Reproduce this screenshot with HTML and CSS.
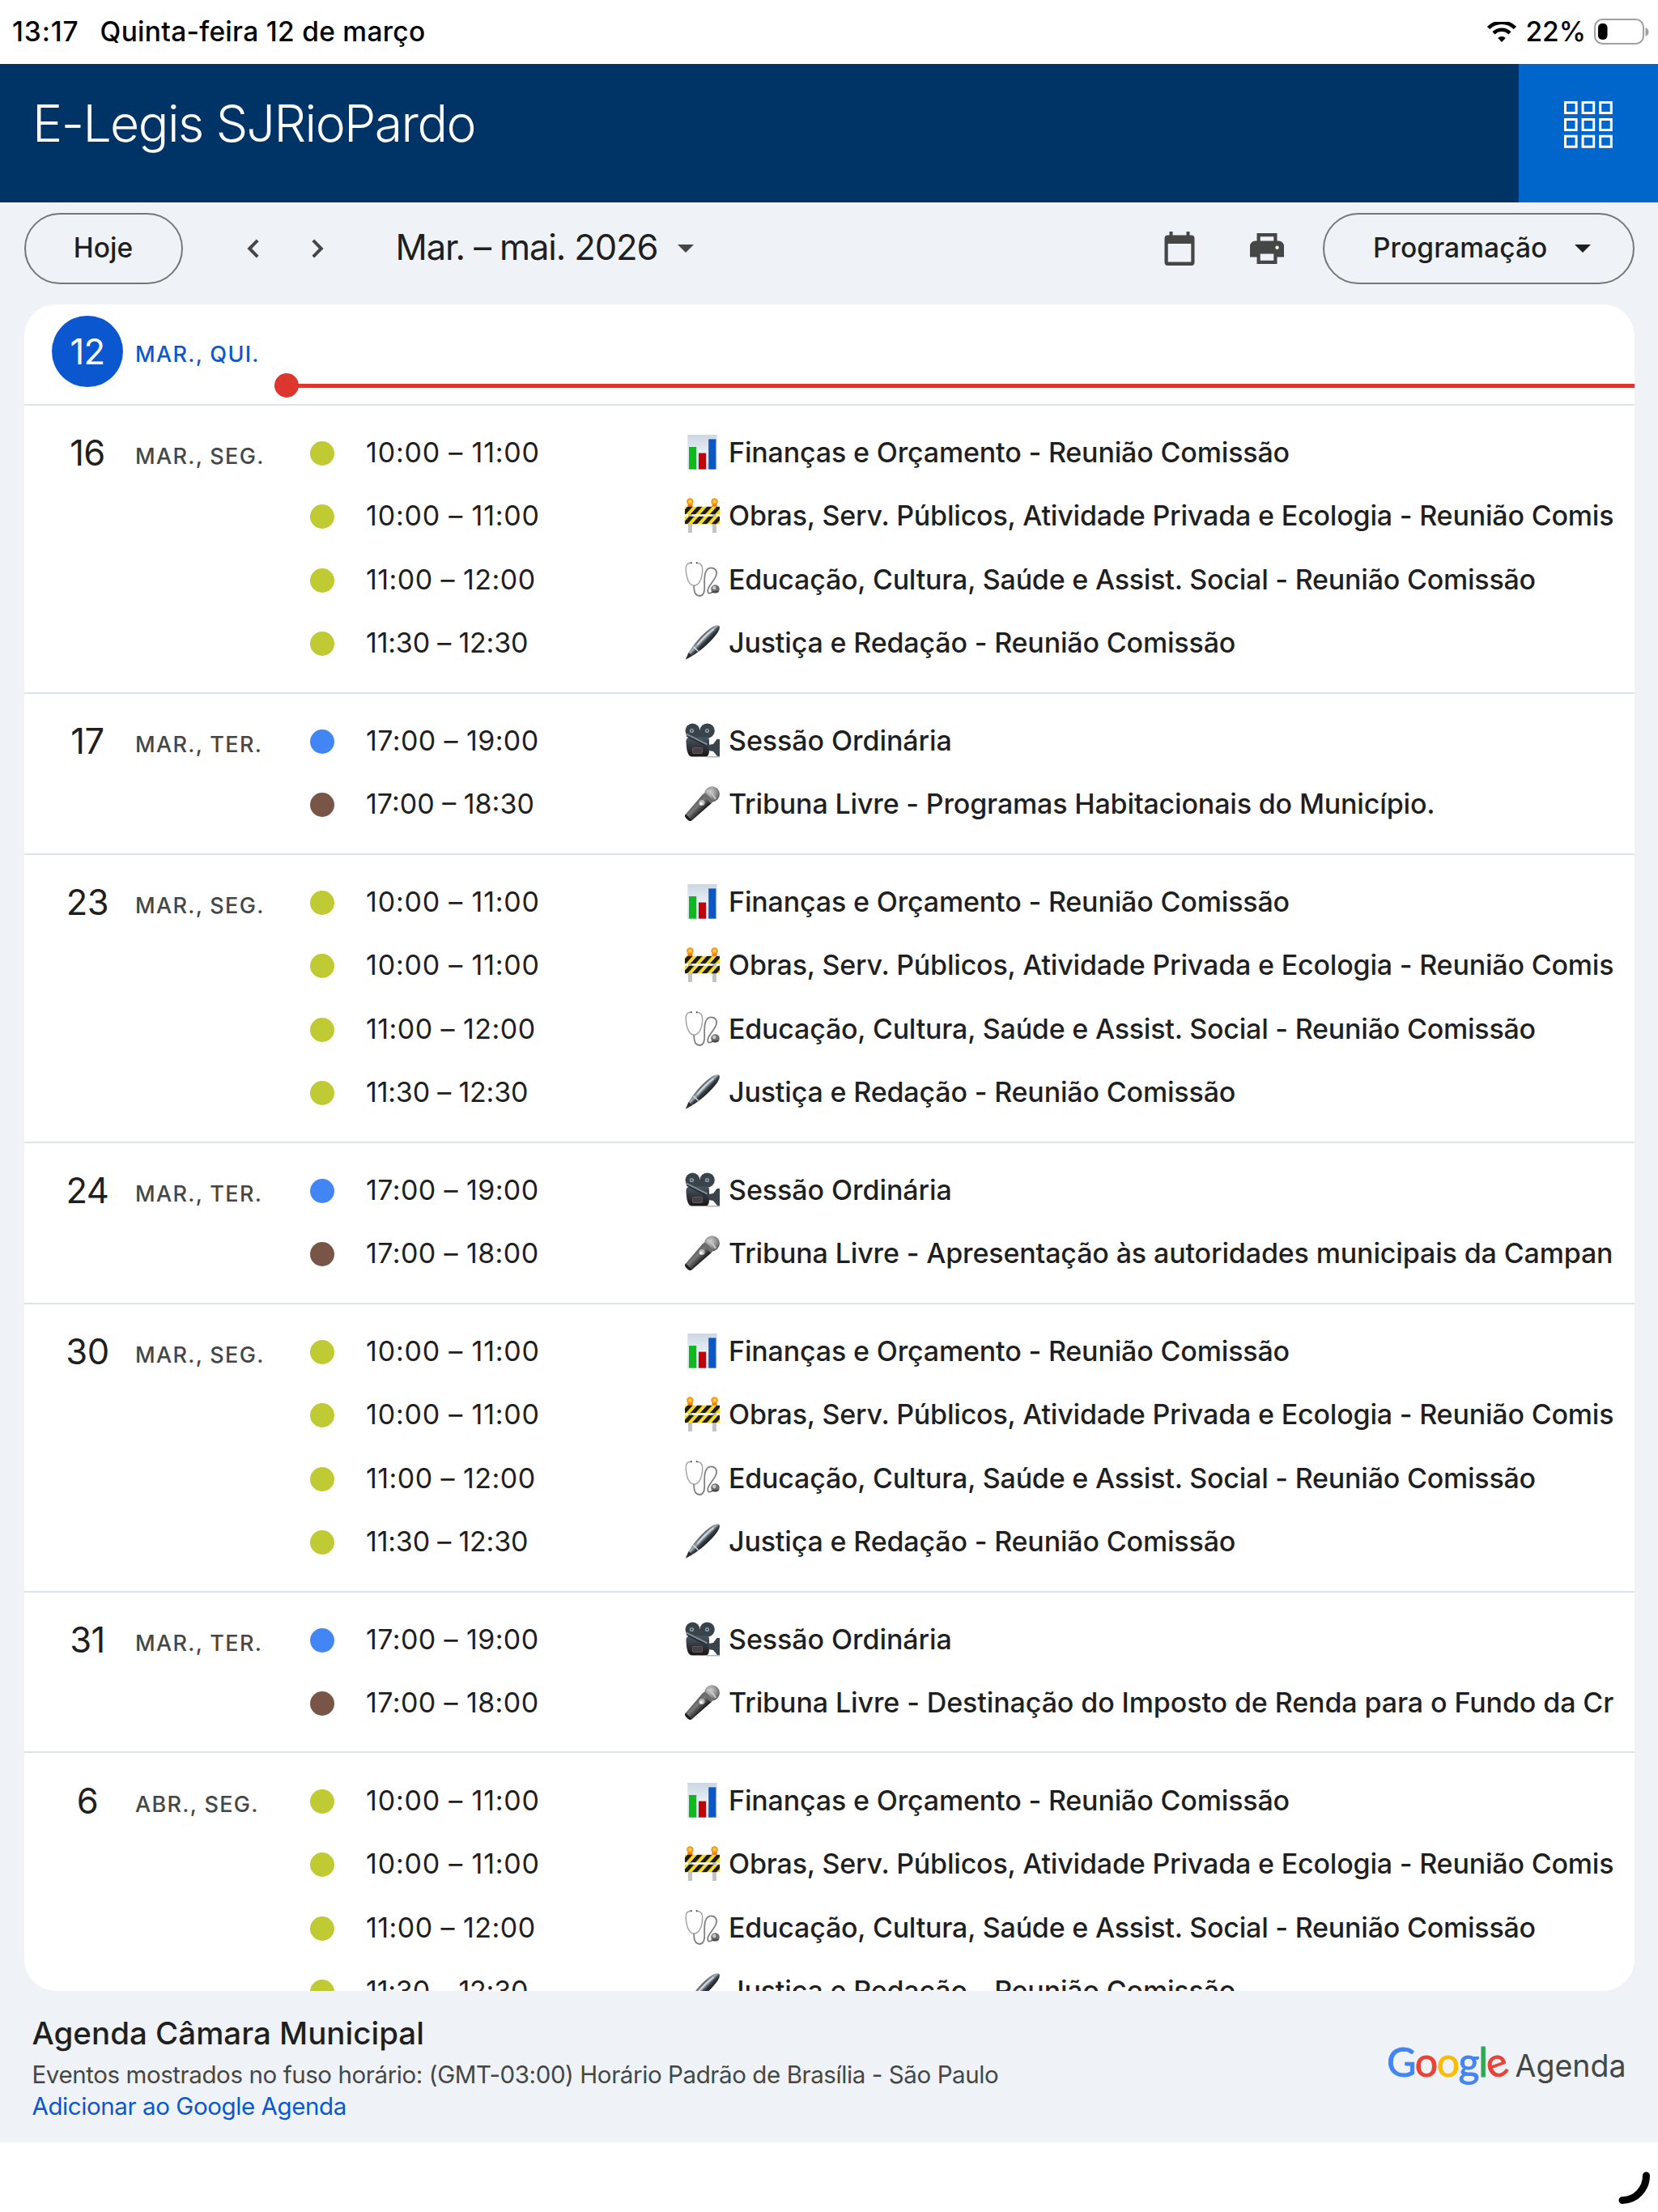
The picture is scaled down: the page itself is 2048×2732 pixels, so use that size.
FILE: index.html
```html
<!DOCTYPE html>
<html lang="pt-BR">
<head>
<meta charset="utf-8">
<title>E-Legis SJRioPardo</title>
<link rel="stylesheet" href="styles.css">
</head>
<body>
<svg class="defs" aria-hidden="true">
  <defs>
    <linearGradient id="g-paper" x1="0" y1="0" x2="0" y2="1"><stop offset="0" stop-color="#cbd7e3"/><stop offset=".5" stop-color="#e6edf5"/><stop offset="1" stop-color="#d5dfea"/></linearGradient>
    <linearGradient id="g-pen" gradientUnits="userSpaceOnUse" x1="19" y1="15" x2="28" y2="24"><stop offset="0" stop-color="#4b545c"/><stop offset=".35" stop-color="#aab4bd"/><stop offset=".6" stop-color="#3a4249"/><stop offset="1" stop-color="#15191d"/></linearGradient>
    <linearGradient id="g-cam" x1="0" y1="0" x2="0" y2="1"><stop offset="0" stop-color="#4a5762"/><stop offset=".6" stop-color="#2c2f34"/><stop offset="1" stop-color="#1c1213"/></linearGradient>
    <linearGradient id="g-mic" gradientUnits="userSpaceOnUse" x1="12" y1="20" x2="22" y2="30"><stop offset="0" stop-color="#5c5c5c"/><stop offset=".4" stop-color="#7a7a7a"/><stop offset="1" stop-color="#1f1f1f"/></linearGradient>
    <radialGradient id="g-ball" cx=".4" cy=".35" r=".7"><stop offset="0" stop-color="#d0d0d0"/><stop offset=".6" stop-color="#8c8c8c"/><stop offset="1" stop-color="#555"/></radialGradient>
    <radialGradient id="g-lamp"><stop offset="0" stop-color="#fff04a"/><stop offset=".5" stop-color="#ffb21c"/><stop offset="1" stop-color="#f57c14"/></radialGradient>
    <pattern id="p-stripes" width="12" height="10" patternUnits="userSpaceOnUse" patternTransform="translate(0 11) skewX(-42)"><rect width="12" height="10" fill="#f4dc26"/><rect x="3" width="6.4" height="10" fill="#1d1a12"/></pattern>
    <pattern id="p-stripes2" width="12" height="10" patternUnits="userSpaceOnUse" patternTransform="translate(2 23) skewX(-42)"><rect width="12" height="10" fill="#f4dc26"/><rect x="3" width="6.4" height="10" fill="#1d1a12"/></pattern>
  </defs>
  <symbol id="chart" viewBox="0 0 43 43">
    <rect x="3.3" width="36.4" height="43" fill="url(#g-paper)"/>
    <rect x="5" y="15" width="9.2" height="27.6" fill="#0fb81c"/><rect x="17" y="22.6" width="9.2" height="20" fill="#c0040c"/><rect x="29.2" y="5.4" width="9.2" height="37.2" fill="#0d57c4"/>
  </symbol>
  <symbol id="barrier" viewBox="0 0 43 43">
    <path d="M4 18h5v25H4zM34 18h5v25h-5z" fill="#c4c4c4"/>
    <path d="M3.4 7h6v4h-6zM33.6 7h6v4h-6z" fill="#ef7a18"/>
    <circle cx="6.4" cy="4.4" r="4.2" fill="url(#g-lamp)"/><circle cx="36.6" cy="4.4" r="4.2" fill="url(#g-lamp)"/>
    <rect y="10.8" width="43" height="9.4" fill="url(#p-stripes)"/><rect y="22.8" width="43" height="9.4" fill="url(#p-stripes2)"/>
  </symbol>
  <symbol id="steth" viewBox="0 0 43 43">
    <path d="M7 1.200C2.500 1.200 .9 5 1.300 10 2 20 4.500 28.500 11.200 29.200 18 29 21.500 20 21.700 10 21.800 4.500 19.500 1.200 14.800 1.200" fill="none" stroke="#a3a3a3" stroke-width="1.500"/>
    <path d="M11.200 29.200C11 37.500 13.200 42 17.800 42 24 42 24.500 35 24.200 28 23.800 17 25 7.500 32 7.300 38 7.200 40.500 12 38.300 17.500 35.500 24.500 28.500 30 28.200 35.500 28.200 39.500 30.500 39.500 34 37" fill="none" stroke="#808080" stroke-width="1.800"/>
    <path d="M7.800 .2v2M14.600 .2v2" stroke="#444" stroke-width="1.600"/>
    <circle cx="37.500" cy="33.500" r="5.300" fill="#6e6e72"/><circle cx="36.300" cy="32" r="2.300" fill="#c9c9ce"/><path d="M33.500 37.500l8-1" stroke="#3b3b3f" stroke-width="1.500"/>
  </symbol>
  <symbol id="pen" viewBox="0 0 43 43">
    <path d="M1 42.400 4.600 34 7 30.500C13 21 25 7.500 34.500 2 38 .1 41 -.4 42.300 .9 43.600 2.400 42.800 6 40 10 34 18.500 22 29.500 12.500 36L9 38z" fill="url(#g-pen)"/>
    <path d="M1 42.400 4.600 34 9 38z" fill="#2a2e32"/><path d="M10.500 26.500l6 6" stroke="#d8dde2" stroke-width="1.400"/><path d="M15.500 24.500C22 16 29 9.500 35.500 5" stroke="#d5dbe1" stroke-width="1.800" fill="none"/>
  </symbol>
  <symbol id="camera" viewBox="0 0 43 43">
    <circle cx="9.500" cy="9.600" r="9" fill="#39434b"/><circle cx="27.600" cy="9.600" r="9.200" fill="#39434b"/>
    <path d="M9 9h19v10H9z" fill="#39434b"/>
    <path d="M1.500 22c0-3 2-4.500 5-4.500h20c2.500 0 3.500 1.500 3.500 4V34c0 5-1.500 7.500-5 7.500H9C3.500 41.500 1.800 34 1.500 22z" fill="url(#g-cam)"/>
    <path d="M29 27l6-1 4.500-6H43v21h-3l-5-6-6-1z" fill="#3c444b"/><path d="M27 41h16v1.500H27z" fill="#aeb3b8"/>
    <path d="M1.500 13.500l26 13" stroke="#7d8a95" stroke-width="2"/><path d="M2 15.800l24 12" stroke="#1f2529" stroke-width="1.500"/>
    <rect x="9.500" y="30.500" width="12" height="7" rx="1" fill="#454146" stroke="#68666b" stroke-width=".8"/>
    <circle cx="8.500" cy="9.500" r="2.600" fill="#93a1ad"/><circle cx="27.500" cy="9.500" r="2.600" fill="#93a1ad"/>
    <circle cx="8.500" cy="9.500" r="1" fill="#222"/><circle cx="27.500" cy="9.500" r="1" fill="#222"/>
  </symbol>
  <symbol id="mic" viewBox="0 0 43 43">
    <path d="M22.500 9.500 33.500 20.500 9.500 41.500C7.500 43.300 5.500 43.200 3.300 41.200L1.500 39.400C-.2 37.500-.2 36.200 1 34.500z" fill="url(#g-mic)"/>
    <path d="M1 34.500 8.500 42.300C7 43.500 5.200 43 3.300 41.200L1.500 39.400C-.2 37.500-.2 36.200 1 34.500z" fill="#1b1b1b"/>
    <circle cx="33.500" cy="9.700" r="9.500" fill="url(#g-ball)"/>
    <path d="M24 8.500C27.500 9.500 33 15 34.500 19.500L32 21.500 21.500 11z" fill="#6d6d6d"/><path d="M27 5.500C31 6.500 36 11.500 38 16" stroke="#c5c5c5" stroke-width="2.200" fill="none"/>
    <circle cx="21" cy="20.500" r="3.600" fill="#b9b9b9"/><circle cx="20" cy="21.500" r="2" fill="#f0f0f0"/>
  </symbol>
</svg>

<header class="status">
  <div class="status-left"><span class="clock">13:17</span><span class="today">Quinta-feira 12 de março</span></div>
  <div class="status-right">
    <svg class="wifi" viewBox="0 0 36 25"><path d="M18 25l-4.800-4.900a6.800 6.800 0 0 1 9.600 0z"/><path d="M8 13.800a14.200 14.200 0 0 1 20 0M1.600 7.500a23 23 0 0 1 32.800 0" fill="none" stroke="#000" stroke-width="4.600"/></svg>
    <span class="percent">22%</span>
    <svg class="battery" viewBox="0 0 68 32"><rect x="1" y="1" width="60" height="30" rx="9.500" fill="none" stroke="#a0a0a0" stroke-width="2"/><rect x="5" y="6" width="11.500" height="20" rx="5" fill="#000"/><path d="M63.500 11c5.300 2 5.300 9 0 11z" fill="#a0a0a0"/></svg>
  </div>
</header>

<div class="brand">
  <h1 class="brand-title">E-Legis SJRioPardo</h1>
  <div class="apps"><svg class="apps-icon" viewBox="0 0 60 58"><g fill="none" stroke="#fff" stroke-width="3"><path d="M1.500 1.500h13.600v13H1.500zM23.100 1.500h13.600v13H23.100zM44.700 1.500h13.600v13H44.700zM1.500 22.400h13.600v13H1.500zM23.100 22.400h13.600v13H23.100zM44.700 22.400h13.600v13H44.700zM1.500 43.300h13.600v13H1.500zM23.100 43.300h13.600v13H23.100zM44.700 43.300h13.600v13H44.700z"/></g></svg></div>
</div>

<main class="calendar">
  <nav class="toolbar">
    <div class="pill today-btn"><span class="hoje">Hoje</span></div>
    <svg class="chev prev" viewBox="0 0 15 24"><path d="M13.200 1.800 3.200 12l10 10.200" fill="none" stroke="#444746" stroke-width="4"/></svg>
    <svg class="chev next" viewBox="0 0 15 24"><path d="M1.800 1.800 11.800 12l-10 10.200" fill="none" stroke="#444746" stroke-width="4"/></svg>
    <span class="range">Mar. – mai. 2026</span>
    <svg class="caret" viewBox="0 0 20 10"><path d="M0 0h20L10 10z" fill="#444746"/></svg>
    <span class="grow"></span>
    <svg class="cal-icon" viewBox="0 0 38 42"><path fill-rule="evenodd" d="M6.500 0h4v4.500h17V0h4v4.500H33.500a4 4 0 0 1 4 4V38a4 4 0 0 1-4 4H4.500a4 4 0 0 1-4-4V8.500a4 4 0 0 1 4-4h2zM4.700 15v22.500h28.600V15z" fill="#444746"/></svg>
    <svg class="print-icon" viewBox="0 0 42 38"><path fill-rule="evenodd" d="M8.500 0h25v9.500h2a6.500 6.500 0 0 1 6.500 6.500v13.500h-8.500V38h-25v-8.500H0V16a6.500 6.500 0 0 1 6.500-6.500h2zM12.700 4.200v5.300h16.600V4.200zM12.700 25.500v8.300h16.600v-8.300zM33.500 15.500a2.200 2.200 0 1 0 .01 4.400 2.200 2.200 0 0 0-.01-4.400z" fill="#444746"/></svg>
    <div class="pill view-btn"><span class="prog">Programação</span><svg class="caret dark" viewBox="0 0 20 10"><path d="M0 0h20L10 10z" fill="#1f1f1f"/></svg></div>
  </nav>

  <div class="card">
    <section class="day current">
      <div class="date"><span class="num">12</span><span class="label">MAR., QUI.</span></div>
      <div class="now"></div>
    </section>
    <section class="day">
      <div class="date"><span class="num">16</span><span class="label">MAR., SEG.</span></div>
      <div class="events">
        <div class="event"><i class="dot lime"></i><span class="time h10">10:00 – 11:00</span><svg class="emoji"><use href="#chart"/></svg><span class="title t-fin">Finanças e Orçamento - Reunião Comissão</span></div>
        <div class="event"><i class="dot lime"></i><span class="time h10">10:00 – 11:00</span><svg class="emoji"><use href="#barrier"/></svg><span class="title t-obr">Obras, Serv. Públicos, Atividade Privada e Ecologia - Reunião Comis</span></div>
        <div class="event"><i class="dot lime"></i><span class="time h11">11:00 – 12:00</span><svg class="emoji"><use href="#steth"/></svg><span class="title t-edu">Educação, Cultura, Saúde e Assist. Social - Reunião Comissão</span></div>
        <div class="event"><i class="dot lime"></i><span class="time h1130">11:30 – 12:30</span><svg class="emoji"><use href="#pen"/></svg><span class="title t-jus">Justiça e Redação - Reunião Comissão</span></div>
      </div>
    </section>
    <section class="day">
      <div class="date"><span class="num">17</span><span class="label">MAR., TER.</span></div>
      <div class="events">
        <div class="event"><i class="dot blue"></i><span class="time h17">17:00 – 19:00</span><svg class="emoji"><use href="#camera"/></svg><span class="title t-ses">Sessão Ordinária</span></div>
        <div class="event"><i class="dot brown"></i><span class="time">17:00 – 18:30</span><svg class="emoji"><use href="#mic"/></svg><span class="title t-hab">Tribuna Livre - Programas Habitacionais do Município.</span></div>
      </div>
    </section>
    <section class="day">
      <div class="date"><span class="num">23</span><span class="label">MAR., SEG.</span></div>
      <div class="events">
        <div class="event"><i class="dot lime"></i><span class="time h10">10:00 – 11:00</span><svg class="emoji"><use href="#chart"/></svg><span class="title t-fin">Finanças e Orçamento - Reunião Comissão</span></div>
        <div class="event"><i class="dot lime"></i><span class="time h10">10:00 – 11:00</span><svg class="emoji"><use href="#barrier"/></svg><span class="title t-obr">Obras, Serv. Públicos, Atividade Privada e Ecologia - Reunião Comis</span></div>
        <div class="event"><i class="dot lime"></i><span class="time h11">11:00 – 12:00</span><svg class="emoji"><use href="#steth"/></svg><span class="title t-edu">Educação, Cultura, Saúde e Assist. Social - Reunião Comissão</span></div>
        <div class="event"><i class="dot lime"></i><span class="time h1130">11:30 – 12:30</span><svg class="emoji"><use href="#pen"/></svg><span class="title t-jus">Justiça e Redação - Reunião Comissão</span></div>
      </div>
    </section>
    <section class="day">
      <div class="date"><span class="num">24</span><span class="label">MAR., TER.</span></div>
      <div class="events">
        <div class="event"><i class="dot blue"></i><span class="time h17">17:00 – 19:00</span><svg class="emoji"><use href="#camera"/></svg><span class="title t-ses">Sessão Ordinária</span></div>
        <div class="event"><i class="dot brown"></i><span class="time h17">17:00 – 18:00</span><svg class="emoji"><use href="#mic"/></svg><span class="title t-apr">Tribuna Livre - Apresentação às autoridades municipais da Campan</span></div>
      </div>
    </section>
    <section class="day">
      <div class="date"><span class="num">30</span><span class="label">MAR., SEG.</span></div>
      <div class="events">
        <div class="event"><i class="dot lime"></i><span class="time h10">10:00 – 11:00</span><svg class="emoji"><use href="#chart"/></svg><span class="title t-fin">Finanças e Orçamento - Reunião Comissão</span></div>
        <div class="event"><i class="dot lime"></i><span class="time h10">10:00 – 11:00</span><svg class="emoji"><use href="#barrier"/></svg><span class="title t-obr">Obras, Serv. Públicos, Atividade Privada e Ecologia - Reunião Comis</span></div>
        <div class="event"><i class="dot lime"></i><span class="time h11">11:00 – 12:00</span><svg class="emoji"><use href="#steth"/></svg><span class="title t-edu">Educação, Cultura, Saúde e Assist. Social - Reunião Comissão</span></div>
        <div class="event"><i class="dot lime"></i><span class="time h1130">11:30 – 12:30</span><svg class="emoji"><use href="#pen"/></svg><span class="title t-jus">Justiça e Redação - Reunião Comissão</span></div>
      </div>
    </section>
    <section class="day">
      <div class="date"><span class="num">31</span><span class="label">MAR., TER.</span></div>
      <div class="events">
        <div class="event"><i class="dot blue"></i><span class="time h17">17:00 – 19:00</span><svg class="emoji"><use href="#camera"/></svg><span class="title t-ses">Sessão Ordinária</span></div>
        <div class="event"><i class="dot brown"></i><span class="time h17">17:00 – 18:00</span><svg class="emoji"><use href="#mic"/></svg><span class="title t-des">Tribuna Livre - Destinação do Imposto de Renda para o Fundo da Cr</span></div>
      </div>
    </section>
    <section class="day">
      <div class="date"><span class="num">6</span><span class="label">ABR., SEG.</span></div>
      <div class="events">
        <div class="event"><i class="dot lime"></i><span class="time h10">10:00 – 11:00</span><svg class="emoji"><use href="#chart"/></svg><span class="title t-fin">Finanças e Orçamento - Reunião Comissão</span></div>
        <div class="event"><i class="dot lime"></i><span class="time h10">10:00 – 11:00</span><svg class="emoji"><use href="#barrier"/></svg><span class="title t-obr">Obras, Serv. Públicos, Atividade Privada e Ecologia - Reunião Comis</span></div>
        <div class="event"><i class="dot lime"></i><span class="time h11">11:00 – 12:00</span><svg class="emoji"><use href="#steth"/></svg><span class="title t-edu">Educação, Cultura, Saúde e Assist. Social - Reunião Comissão</span></div>
        <div class="event"><i class="dot lime"></i><span class="time h1130">11:30 – 12:30</span><svg class="emoji"><use href="#pen"/></svg><span class="title t-jus">Justiça e Redação - Reunião Comissão</span></div>
      </div>
    </section>
  </div>

  <footer class="footer">
    <div class="about">
      <div class="name">Agenda Câmara Municipal</div>
      <div class="zone">Eventos mostrados no fuso horário: (GMT-03:00) Horário Padrão de Brasília - São Paulo</div>
      <div class="add">Adicionar ao Google Agenda</div>
    </div>
    <div class="logo"><span class="google"><b class="c1">G</b><b class="c2">o</b><b class="c3">o</b><b class="c1">g</b><b class="c4">l</b><b class="c2 tilt">e</b></span><span class="product">Agenda</span></div>
  </footer>
</main>
<svg class="corner" viewBox="0 0 40 40"><path d="M34.500 5C34.500 21 22 35.500 5 35.500" fill="none" stroke="#000" stroke-width="9" stroke-linecap="round"/></svg>
</body>
</html>
```
FILE: styles.css
```css
* { box-sizing: border-box; }
body {
  margin: 0;
  width: 2048px;
  height: 2732px;
  background: #fff;
  font-family: Inter, "Noto Sans", sans-serif;
  color: #1f1f1f;
  overflow: hidden;
  white-space: nowrap;
  display: flex;
  flex-direction: column;
  position: relative;
}
svg { display: block; flex: none; }
.defs { position: absolute; width: 0; height: 0; }

/* status bar */
.status {
  height: 78.7px;
  flex: none;
  display: flex;
  justify-content: space-between;
  padding: 0 11px 0 15px;
  font-size: 33.500px;
  font-weight: 500;
  line-height: 79px;
  color: #000;
}
.status-left, .status-right { display: flex; }
.clock { letter-spacing: .9px; }
.today { margin-left: 26px; letter-spacing: .3px; }
.status-right { align-items: center; }
.wifi { width: 36px; height: 25px; margin-right: 11px; }
.battery { width: 68px; height: 32px; margin-left: 10px; }

/* brand bar */
.brand {
  height: 171.600px;
  flex: none;
  background: #003366;
  display: flex;
  justify-content: space-between;
}
.brand-title {
  margin: 0;
  padding-left: 40px;
  color: #fff;
  font-weight: 300;
  font-size: 62.500px;
  letter-spacing: -1.550px;
  line-height: 146px;
}
.apps { width: 172px; background: #0066cc; padding: 46px 0 0 56px; }
.apps-icon { width: 60px; height: 58px; }

/* calendar */
.calendar {
  height: 2395.700px;
  flex: none;
  background: #eff3f8;
  padding: 12.700px 29.500px 0;
  display: flex;
  flex-direction: column;
}
.toolbar { height: 88px; flex: none; display: flex; align-items: center; }
.pill {
  height: 88px;
  border: 2px solid #747775;
  border-radius: 44px;
  display: flex;
  align-items: center;
  font-size: 33.500px;
  font-weight: 500;
}
.hoje, .prog { padding-bottom: 2px; }
.prog { letter-spacing: .1px; }
.today-btn { width: 196px; justify-content: center; }
.chev { width: 15px; height: 24px; }
.prev { margin-left: 79px; }
.next { margin-left: 65px; }
.range { margin-left: 89px; width: 348px; font-size: 43.500px; letter-spacing: -1.100px; padding-bottom: 3px; }
.caret { width: 20px; height: 10px; }
.grow { flex: 1; }
.cal-icon { width: 38px; height: 42px; }
.print-icon { width: 42px; height: 38px; margin-left: 68px; }
.view-btn { width: 384.500px; margin-left: 48px; padding-left: 60px; }
.view-btn .caret { margin-left: auto; margin-right: 52px; }

.card {
  margin-top: 24.700px;
  height: 2083.800px;
  flex: none;
  background: #fff;
  border-radius: 39px;
  overflow: hidden;
}
.day {
  display: flex;
  border-top: 2px solid #dde3ea;
  padding: 18.300px 0 21.440px;
}
.date { display: flex; width: 353.500px; height: 78.580px; flex: none; padding-left: 34.500px; }
.num { width: 88px; text-align: center; font-size: 43.500px; line-height: 80px; letter-spacing: -.5px; }
.label {
  margin-left: 15px;
  font-size: 27px;
  font-weight: 500;
  letter-spacing: 1.300px;
  line-height: 90px;
  color: #444746;
}
.current { border: 0; padding: 14.300px 0 0; height: 123px; position: relative; }
.current .num { height: 88.500px; line-height: 88px; border-radius: 50%; background: #0b57d0; color: #fff; }
.current .label { line-height: 96px; color: #0b57d0; }
.now { position: absolute; left: 324px; right: 0; top: 98.300px; height: 5px; background: #dc362e; }
.now::before { content: ""; position: absolute; left: -15px; top: -12.500px; width: 30px; height: 30px; border-radius: 50%; background: #dc362e; }
.event { height: 78.580px; display: flex; align-items: center; }
.dot { width: 30px; height: 30px; border-radius: 50%; margin-top: 3px; flex: none; }
.lime { background: #c0ca33; }
.blue { background: #4285f4; }
.brown { background: #795548; }
.time { width: 394px; margin-left: 39px; flex: none; font-size: 34px; }
.h10 { letter-spacing: .8px; }
.h11 { letter-spacing: .45px; }
.h1130 { letter-spacing: -.2px; }
.h17 { letter-spacing: .4px; }
.emoji { width: 43px; height: 43px; }
.title { margin-left: 11px; font-size: 34px; font-weight: 500; letter-spacing: -.160px; }
.t-obr { letter-spacing: -.180px; }
.t-edu { letter-spacing: -.215px; }
.t-ses { letter-spacing: -.060px; }
.t-apr { letter-spacing: -.135px; }
.t-des { letter-spacing: -.100px; }

/* footer */
.footer { display: flex; justify-content: space-between; padding: 31px 10px 0; }
.name { font-size: 38.500px; font-weight: 500; line-height: 42px; }
.zone { font-size: 29.500px; line-height: 39px; margin-top: 11px; letter-spacing: -.410px; color: #444746; }
.add { font-size: 29.500px; line-height: 39px; letter-spacing: -.410px; color: #0b57d0; }
.logo { display: flex; align-items: baseline; height: 80px; padding-top: 26px; }
.google { font-size: 50px; font-family: Lato, sans-serif; line-height: 60px; letter-spacing: -1.400px; -webkit-text-stroke: .9px; }
.google b { font-weight: 400; }
.tilt { display: inline-block; transform: rotate(-20deg); transform-origin: 48% 63%; }
.c1 { color: #4285f4; }
.c2 { color: #ea4335; }
.c3 { color: #fbbc05; }
.c4 { color: #34a853; }
.product { margin-left: 10px; font-size: 37.500px; color: #444746; }

.corner { position: absolute; left: 1998.500px; top: 2681.500px; width: 40px; height: 40px; }
```
